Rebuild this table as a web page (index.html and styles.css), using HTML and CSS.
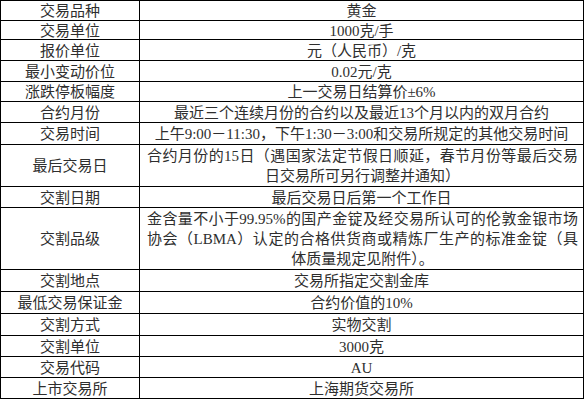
FILE: index.html
```html
<!DOCTYPE html>
<html lang="zh-CN">
<head>
<meta charset="utf-8">
<title>黄金期货合约</title>
<link rel="stylesheet" href="styles.css">
</head>
<body>
<div class="spec">
  <div class="cell key">交易品种</div><div class="cell val">黄金</div>
  <div class="cell key">交易单位</div><div class="cell val">1000克/手</div>
  <div class="cell key">报价单位</div><div class="cell val">元（人民币）/克</div>
  <div class="cell key">最小变动价位</div><div class="cell val">0.02元/克</div>
  <div class="cell key">涨跌停板幅度</div><div class="cell val">上一交易日结算价±6%</div>
  <div class="cell key">合约月份</div><div class="cell val">最近三个连续月份的合约以及最近13个月以内的双月合约</div>
  <div class="cell key">交易时间</div><div class="cell val">上午9:00－11:30，下午1:30－3:00和交易所规定的其他交易时间</div>
  <div class="cell key">最后交易日</div><div class="cell val multi"><span class="line full">合约月份的15日（遇国家法定节假日顺延，春节月份等最后交易</span><span class="line">日交易所可另行调整并通知）</span></div>
  <div class="cell key">交割日期</div><div class="cell val">最后交易日后第一个工作日</div>
  <div class="cell key">交割品级</div><div class="cell val multi"><span class="line full">金含量不小于99.95%的国产金锭及经交易所认可的伦敦金银市场</span><span class="line full">协会（LBMA）认定的合格供货商或精炼厂生产的标准金锭（具</span><span class="line">体质量规定见附件）。</span></div>
  <div class="cell key">交割地点</div><div class="cell val">交易所指定交割金库</div>
  <div class="cell key">最低交易保证金</div><div class="cell val">合约价值的10%</div>
  <div class="cell key">交割方式</div><div class="cell val">实物交割</div>
  <div class="cell key">交割单位</div><div class="cell val">3000克</div>
  <div class="cell key">交易代码</div><div class="cell val">AU</div>
  <div class="cell key">上市交易所</div><div class="cell val">上海期货交易所</div>
</div>
</body>
</html>
```
FILE: styles.css
```css
html, body {
  margin: 0;
  padding: 0;
  background: #fff;
}

.spec {
  display: grid;
  width: 582px;
  grid-template-columns: 138px 443px;
  grid-template-rows: 19px 18px 20px 20px 19px 20px 21px 41px 20px 61px 21px 21px 21px 20px 20px 20px;
  gap: 1px;
  background: #000;
  border: 1px solid #000;
  font-family: "Liberation Serif", "Noto Sans CJK SC", serif;
  font-size: 15px;
  line-height: 20px;
  color: #2e2e2e;
}

.cell {
  background: #fff;
  display: flex;
  align-items: center;
  justify-content: center;
  white-space: nowrap;
  overflow: hidden;
  padding-top: 1px;
}

.val.multi {
  display: flex;
  flex-direction: column;
  align-items: stretch;
  justify-content: center;
  padding: 1px 5px 0 7px;
}

.line {
  display: block;
  text-align: center;
}

.line.full {
  text-align: justify;
  text-align-last: justify;
}
```
